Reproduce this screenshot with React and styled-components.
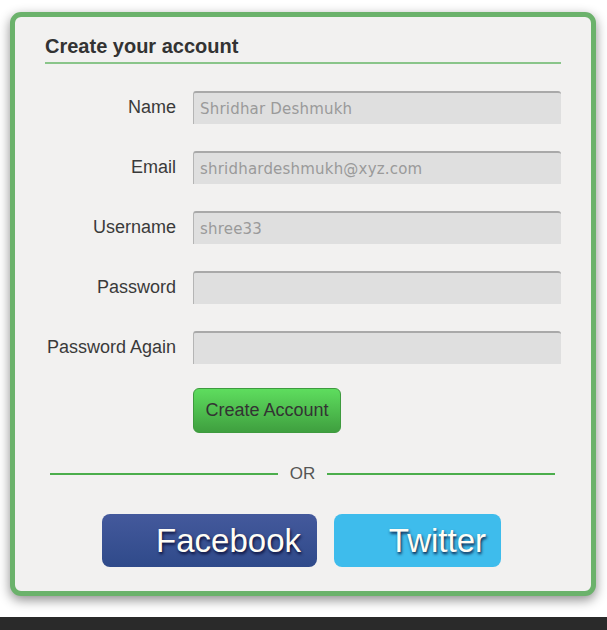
import React from "react";
import styled, { createGlobalStyle } from "styled-components";

const GlobalStyle = createGlobalStyle`
  html, body {
    margin: 0;
    padding: 0;
    background: #ffffff;
  }
  body {
    font-family: "Liberation Sans", Arial, sans-serif;
  }
`;

const Page = styled.div`
  width: 607px;
  height: 630px;
  display: flex;
  flex-direction: column;
  overflow: hidden;
`;

const Stage = styled.div`
  flex: 1;
  padding: 12px 11px 0 10px;
`;

const Card = styled.div`
  box-sizing: border-box;
  width: 586px;
  height: 584px;
  border: 5px solid #6bb26b;
  border-radius: 11px;
  background: #f2f1f0;
  box-shadow: 0 4px 12px rgba(0, 0, 0, 0.45);
  padding: 18px 30px 0 30px;
`;

const Title = styled.h2`
  margin: 0;
  font-size: 20px;
  line-height: 23px;
  font-weight: bold;
  color: #333;
  padding-bottom: 4px;
  border-bottom: 2px solid #8ac58a;
`;

const Form = styled.div`
  display: grid;
  grid-template-columns: 161px 368px;
  column-gap: 17px;
  row-gap: 27px;
  margin-top: 27px;
  margin-left: -30px;
  align-items: center;
`;

const Label = styled.label`
  text-align: right;
  font-size: 18px;
  color: #3a3a3a;
`;

const Input = styled.input`
  box-sizing: border-box;
  height: 33px;
  width: 368px;
  border: none;
  border-top: 2px solid #a9a9a9;
  border-left: 1px solid #b5b5b5;
  border-radius: 3px 3px 0 0;
  background: #dfdfdf;
  padding: 0 6px;
  font-family: "DejaVu Sans", Verdana, sans-serif;
  font-size: 15px;
  letter-spacing: 0.2px;
  color: #9a9a9a;
  outline: none;
`;

const SubmitButton = styled.button`
  grid-column: 2;
  justify-self: start;
  margin-top: -3px;
  width: 148px;
  height: 45px;
  border: 1px solid #3e9a3e;
  border-radius: 6px;
  background: linear-gradient(#5edd5e, #3f9f3f);
  color: #333;
  font-family: "Liberation Sans", Arial, sans-serif;
  font-size: 18px;
`;

const Divider = styled.div`
  display: flex;
  align-items: center;
  gap: 12px;
  margin: 31px 0 0 5px;
  width: 505px;
  color: #555;
  font-size: 17px;

  &::before,
  &::after {
    content: "";
    flex: 1;
    height: 2px;
    background: #4cae4c;
  }
`;

const Socials = styled.div`
  display: flex;
  gap: 17px;
  margin: 30px 0 0 57px;
`;

const SocialButton = styled.button`
  height: 53px;
  width: ${(p) => p.$w}px;
  border: none;
  border-radius: 8px;
  background: ${(p) => p.$bg};
  color: #fffdf5;
  font-family: "Liberation Sans", Arial, sans-serif;
  font-size: 33px;
  text-align: right;
  padding: 0 ${(p) => p.$pr}px 0 0;
  text-shadow: 1px 2px 3px rgba(0, 0, 40, 0.85);
`;

const BottomBar = styled.div`
  height: 13px;
  background: #2a2a2a;
`;

const fields = [
  { label: "Name", value: "Shridhar Deshmukh" },
  { label: "Email", value: "shridhardeshmukh@xyz.com" },
  { label: "Username", value: "shree33" },
  { label: "Password", value: "", type: "password" },
  { label: "Password Again", value: "", type: "password" },
];

export default function App() {
  return (
    <Page>
      <GlobalStyle />
      <Stage>
        <Card>
          <Title>Create your account</Title>
          <Form>
            {fields.map((f) => (
              <React.Fragment key={f.label}>
                <Label>{f.label}</Label>
                <Input type={f.type || "text"} defaultValue={f.value} readOnly />
              </React.Fragment>
            ))}
            <SubmitButton>Create Account</SubmitButton>
          </Form>
          <Divider>OR</Divider>
          <Socials>
            <SocialButton $w={215} $pr={16} $bg="linear-gradient(#44599c, #2f4a8a)">
              Facebook
            </SocialButton>
            <SocialButton $w={167} $pr={15} $bg="#3ebcec">
              Twitter
            </SocialButton>
          </Socials>
        </Card>
      </Stage>
      <BottomBar />
    </Page>
  );
}
